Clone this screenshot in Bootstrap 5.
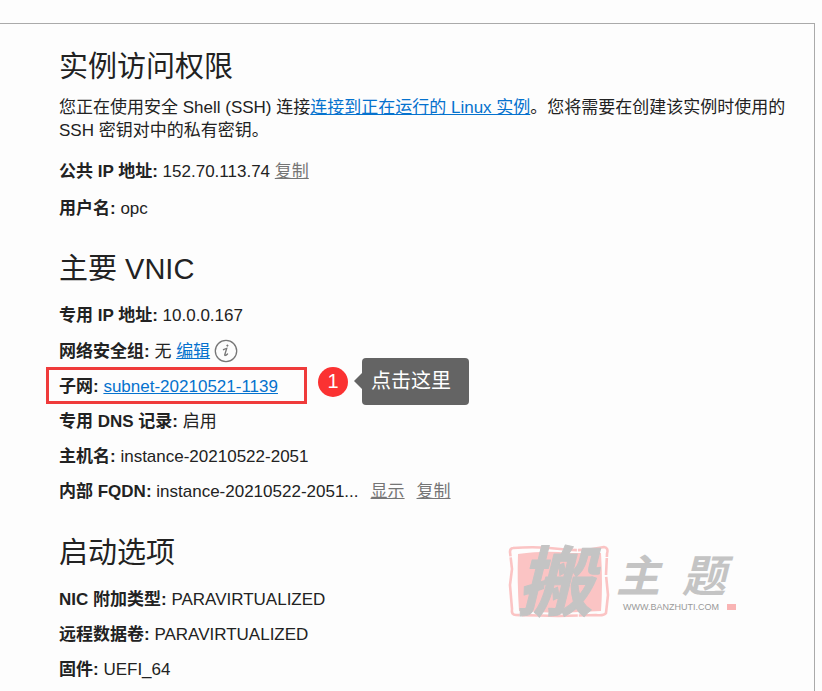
<!DOCTYPE html>
<html lang="zh-CN">
<head>
<meta charset="utf-8">
<meta name="viewport" content="width=device-width, initial-scale=1">
<title>实例访问权限</title>
<link href="https://cdn.jsdelivr.net/npm/bootstrap@5.3.0/dist/css/bootstrap.min.css" rel="stylesheet">
<style>
body{background:#fdfdfd;color:#222;font-family:"Liberation Sans","Noto Sans CJK SC",sans-serif;font-size:17px;line-height:23px}
.page{padding:23px 7px 0 0}
.panel{border-top:1px solid #aaa;border-right:1px solid #aaa;padding:25px 24px 10px 59px}
h2{font-size:29px;line-height:36px;font-weight:400}
.details{gap:12px;margin:17px 0 32px}
.details.access{gap:14px;margin:18px 0 31px}
.intro{margin-top:11px}
a{color:#0572ce}
a.action{color:#757575}
.info{width:24px;height:24px}
.marked::before{content:"";position:absolute;inset:-8px -29px -6px -13px;border:3px solid #ef3b3b;pointer-events:none}
.step{position:absolute;left:calc(100% + 40px);top:-17px;height:47px;gap:14px;white-space:nowrap;color:#fff;font-size:20px}
.num{width:30px;height:30px;background:#fb3232}
.tip{position:relative;height:47px;width:107px;padding:0 9px;background:#646464}
.tip::before{content:"";position:absolute;left:-8px;top:15px;border:solid transparent;border-width:8px 8px 8px 0;border-right-color:#646464}
.brand{position:absolute;right:72px;bottom:72px;width:234px;height:74px;overflow:visible}
</style>
<script src="https://cdn.jsdelivr.net/npm/bootstrap@5.3.0/dist/js/bootstrap.bundle.min.js"></script>
</head>
<body>
<div class="page d-flex min-vh-100">
<main class="panel flex-grow-1 position-relative">
  <section>
    <h2 class="mb-0">实例访问权限</h2>
    <p class="intro mb-0">您正在使用安全 Shell (SSH) 连接<a href="#">连接到正在运行的 Linux 实例</a>。您将需要在创建该实例时使用的 SSH 密钥对中的私有密钥。</p>
    <div class="details access d-flex flex-column">
      <div><strong>公共 IP 地址:</strong> 152.70.113.74 <a class="action" href="#">复制</a></div>
      <div><strong>用户名:</strong> opc</div>
    </div>
  </section>
  <section>
    <h2 class="mb-0">主要 VNIC</h2>
    <div class="details d-flex flex-column">
      <div><strong>专用 IP 地址:</strong> 10.0.0.167</div>
      <div class="d-flex align-items-center">
        <span><strong>网络安全组:</strong> 无 <a href="#">编辑</a></span>
        <button type="button" class="btn p-0 border-0 ms-1 d-flex" aria-label="信息"><svg class="info" viewBox="0 0 24 24" fill="none" stroke="#777" aria-hidden="true"><circle cx="12" cy="12" r="10.7" stroke-width="1.3"/><path d="M9.5 10.7c1.4-.7 2.5-1.2 3.2-1.3l-1.9 6.2c-.3 1.2.7 1.2 2.7-.7" stroke-width="1.4" stroke-linecap="round"/><circle cx="13.4" cy="6.6" r=".8" fill="#777" stroke-width=".5"/></svg></button>
      </div>
      <div class="d-flex">
        <div class="marked position-relative"><strong>子网:</strong> <a href="#">subnet-20210521-1139</a>
          <div class="step d-flex align-items-center"><span class="num rounded-circle d-flex align-items-center justify-content-center">1</span><span class="tip rounded-1 d-flex align-items-center">点击这里</span></div>
        </div>
      </div>
      <div><strong>专用 DNS 记录:</strong> 启用</div>
      <div><strong>主机名:</strong> instance-20210522-2051</div>
      <div class="d-flex"><span class="me-2"><strong>内部 FQDN:</strong> instance-20210522-2051...</span><a class="action me-2 ms-1" href="#">显示</a><a class="action ms-1" href="#">复制</a></div>
    </div>
  </section>
  <section>
    <h2 class="mb-0">启动选项</h2>
    <div class="details d-flex flex-column mb-0">
      <div><strong>NIC 附加类型:</strong> PARAVIRTUALIZED</div>
      <div><strong>远程数据卷:</strong> PARAVIRTUALIZED</div>
      <div><strong>固件:</strong> UEFI_64</div>
    </div>
  </section>
  <svg class="brand" viewBox="0 0 234 74" role="img" aria-label="搬主题">
    <path d="M10 9Q40 5 60 8L93 8Q95 40 93 66L50 68 11 66Q9 35 10 9Z" fill="#fbc4c4"/>
    <path d="M5 3Q30 1 52 4T96 2Q101 3 99 9L98 30 100 50 98 68Q96 71 88 70L50 71 8 70Q3 70 4 64L2 40 4 24 2 7Q2 3 5 3Z" fill="none" stroke="#fbc4c4" stroke-width="2.6" stroke-dasharray="64 1 38 1 17 2"/>
    <g fill="#c4c4c4" stroke="#c4c4c4" stroke-linejoin="round" font-family="'Noto Sans CJK SC',sans-serif" font-weight="700">
      <text x="9" y="65" font-size="76" font-style="italic" stroke-width="1">搬</text>
      <g stroke="none" font-size="44" font-style="italic"><text x="108" y="47">主</text><text x="174" y="47">题</text></g>
      <text x="115" y="65" font-family="'Liberation Sans',sans-serif" font-weight="400" font-size="9" stroke="none" fill="#999">WWW.BANZHUTI.COM</text>
    </g>
    <path d="M219 59h9v6h-9z" fill="#f9b4b4"/>
  </svg>
</main>
</div>
</body>
</html>
